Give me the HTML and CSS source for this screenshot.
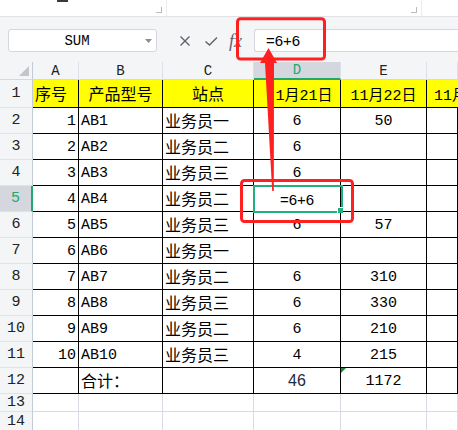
FILE: index.html
```html
<!DOCTYPE html>
<html lang="zh">
<head>
<meta charset="utf-8">
<title>Sheet</title>
<link rel="stylesheet" href="styles.css">
</head>
<body>
<div class="app">
  <div class="ribbon">
    <div class="grp g1"><span class="mark"></span><span class="tick"></span></div>
    <div class="grp g2"><span class="tick"></span></div>
    <div class="grp g3"></div>
  </div>
  <div class="fbar">
    <div class="namebox"><span class="nm">SUM</span><svg class="caret" width="7" height="4" viewBox="0 0 7 4"><path d="M0 0H7L3.5 4Z" fill="#8a8d93"/></svg></div>
    <div class="fbtns">
      <svg class="ico" width="16" height="16" viewBox="0 0 16 16"><path d="M3.5 3.5L12.5 12.5M12.5 3.5L3.5 12.5" stroke="#5f626a" stroke-width="1.4" fill="none"/></svg>
      <svg class="ico" width="16" height="16" viewBox="0 0 16 16"><path d="M2.5 8.5L6.5 12L14 4.5" stroke="#5f626a" stroke-width="1.4" fill="none"/></svg>
      <span class="fx">fx</span>
    </div>
    <div class="finput">=6+6</div>
  </div>
  <div class="sheet">
    <div class="corner"><span class="tri"></span></div>
    <div class="ch">A</div><div class="ch">B</div><div class="ch">C</div><div class="ch csel">D</div><div class="ch">E</div><div class="ch"></div>

    <div class="rh">1</div>
    <div class="c y"><span class="zh">序号</span></div>
    <div class="c y m"><span class="zh">产品型号</span></div>
    <div class="c y m"><span class="zh">站点</span></div>
    <div class="c y m dhead">1月21日</div>
    <div class="c y m">11月22日</div>
    <div class="c y fcol">11月</div>

    <div class="rh">2</div><div class="c r">1</div><div class="c">AB1</div><div class="c"><span class="zh">业务员一</span></div><div class="c m">6</div><div class="c m">50</div><div class="c"></div>
    <div class="rh">3</div><div class="c r">2</div><div class="c">AB2</div><div class="c"><span class="zh">业务员二</span></div><div class="c m">6</div><div class="c m"></div><div class="c"></div>
    <div class="rh">4</div><div class="c r">3</div><div class="c">AB3</div><div class="c"><span class="zh">业务员三</span></div><div class="c m">6</div><div class="c m"></div><div class="c"></div>
    <div class="rh rsel">5</div><div class="c r">4</div><div class="c">AB4</div><div class="c"><span class="zh">业务员二</span></div><div class="c m sans">=6+6</div><div class="c m"></div><div class="c"></div>
    <div class="rh">6</div><div class="c r">5</div><div class="c">AB5</div><div class="c"><span class="zh">业务员三</span></div><div class="c m">6</div><div class="c m">57</div><div class="c"></div>
    <div class="rh">7</div><div class="c r">6</div><div class="c">AB6</div><div class="c"><span class="zh">业务员一</span></div><div class="c m"></div><div class="c m"></div><div class="c"></div>
    <div class="rh">8</div><div class="c r">7</div><div class="c">AB7</div><div class="c"><span class="zh">业务员二</span></div><div class="c m">6</div><div class="c m">310</div><div class="c"></div>
    <div class="rh">9</div><div class="c r">8</div><div class="c">AB8</div><div class="c"><span class="zh">业务员三</span></div><div class="c m">6</div><div class="c m">330</div><div class="c"></div>
    <div class="rh">10</div><div class="c r">9</div><div class="c">AB9</div><div class="c"><span class="zh">业务员二</span></div><div class="c m">6</div><div class="c m">210</div><div class="c"></div>
    <div class="rh">11</div><div class="c r">10</div><div class="c">AB10</div><div class="c"><span class="zh">业务员三</span></div><div class="c m">4</div><div class="c m">215</div><div class="c"></div>
    <div class="rh">12</div><div class="c r"></div><div class="c"><span class="zh">合计：</span></div><div class="c"></div><div class="c m sans total">46</div><div class="c m flag">1172<span class="gtri"></span></div><div class="c"></div>

    <div class="rh">13</div><div class="e"></div><div class="e"></div><div class="e"></div><div class="e"></div><div class="e"></div><div class="e"></div>
    <div class="rh">14</div><div class="e"></div><div class="e"></div><div class="e"></div><div class="e"></div><div class="e"></div><div class="e"></div>

    <div class="active"><span class="handle"></span></div>
  </div>
  <svg class="annot" width="458" height="430" viewBox="0 0 458 430">
    <rect x="237.5" y="18.8" width="87" height="40.2" rx="3" fill="none" stroke="#ff2020" stroke-width="3"/>
    <rect x="241.5" y="180.5" width="111" height="41" rx="3" fill="none" stroke="#ff2020" stroke-width="3"/>
    <polygon points="268.5,48 277,63 274,63 273.8,191 272.2,191 265,63 260,63" fill="#ff2020"/>
  </svg>
</div>
</body>
</html>
```

FILE: styles.css
```css
body {
  margin: 0;
  background: #fff;
  font-family: "Liberation Mono", "Noto Sans CJK SC", monospace;
  color: #000;
}

.app {
  position: relative;
  width: 458px;
  height: 430px;
  overflow: hidden;
}

/* ribbon strip */
.ribbon {
  display: flex;
  height: 16px;
  background: #fff;
  border-bottom: 1px solid #e1e2e6;
}
.grp {
  display: flex;
  justify-content: flex-end;
  align-items: flex-end;
  box-sizing: border-box;
  padding: 0 4px 3px 0;
  border-right: 1px solid #ebecef;
}
.g1 {
  width: 167px;
  justify-content: space-between;
  padding-left: 57px;
}
.g2 { width: 255px; }
.g3 { flex: 1; border-right: none; }
.mark {
  align-self: flex-start;
  width: 11px;
  height: 2px;
  background: #3a3a3a;
}
.tick {
  width: 5px;
  height: 5px;
  border-right: 1px solid #b8bbc1;
  border-bottom: 1px solid #b8bbc1;
}

/* formula bar */
.fbar {
  display: flex;
  align-items: flex-start;
  height: 45px;
  box-sizing: border-box;
  padding: 12px 0 0 8px;
  background: #f4f5f7;
}
.namebox {
  width: 149px;
  height: 23px;
  box-sizing: border-box;
  border: 1px solid #d5d7dc;
  border-radius: 3px;
  background: #fff;
  display: flex;
  align-items: center;
}
.nm {
  flex: 1;
  text-align: center;
  font-size: 14px;
}
.caret { margin-right: 4px; }
.fbtns {
  display: flex;
  align-items: center;
  height: 23px;
  margin-left: 20px;
  gap: 10px;
}
.fx {
  font-family: "Liberation Serif", serif;
  font-style: italic;
  font-size: 18px;
  color: #5f626a;
  width: 17px;
  line-height: 20px;
}
.finput {
  flex: 1;
  margin-left: 8px;
  height: 23px;
  box-sizing: border-box;
  border: 1px solid #d5d7dc;
  border-right: none;
  border-radius: 3px 0 0 3px;
  background: #fff;
  padding-left: 11px;
  font-family: "Liberation Sans", sans-serif;
  font-size: 15px;
  line-height: 21px;
}

/* sheet grid */
.sheet {
  position: relative;
  display: grid;
  grid-template-columns: 33px 46px 84px 91px 87px 86px 1fr;
  grid-template-rows: 18px 28px repeat(11, 26px) 18px 20px;
  background: #fff;
}
.corner, .ch, .rh {
  background: #f4f5f7;
  box-sizing: border-box;
  display: flex;
  align-items: center;
  justify-content: center;
  font-size: 14px;
  color: #222;
}
.corner {
  border-right: 1px solid #c4cad8;
  border-bottom: 1px solid #d6d9df;
  justify-content: flex-end;
  align-items: flex-end;
  padding: 0 3px 3px 0;
}
.tri {
  width: 0;
  height: 0;
  border-left: 10px solid transparent;
  border-bottom: 10px solid #c3c5ca;
}
.ch {
  border-right: 1px solid #dcdfe5;
  border-bottom: 1px solid #d6d9df;
}
.csel {
  background: #d4d7de;
  color: #22a86f;
  border-bottom: 2px solid #22a86f;
}
.rh {
  border-right: 1px solid #c4cad8;
  border-bottom: 1px solid #e0e2e8;
  font-size: 15px;
}
.rsel {
  background: #d4d7de;
  color: #22a86f;
  border-right: 2px solid #22a86f;
}

.c {
  box-sizing: border-box;
  border-right: 1px solid #000;
  border-bottom: 1px solid #000;
  display: flex;
  align-items: center;
  padding: 1px 2px 0;
  white-space: nowrap;
  overflow: hidden;
  font-size: 15px;
}
.y { background: #ffff00; }
.r { justify-content: flex-end; }
.m { justify-content: center; }
.dhead { padding-left: 16px; }
.zh {
  font-size: 16px;
  font-family: "Noto Sans CJK SC", sans-serif;
  line-height: 20px;
  padding-bottom: 2px;
}
.fcol { padding-left: 7px; border-right: none; }
.sans {
  font-family: "Liberation Sans", sans-serif;
  font-size: 15px;
}
.total { font-size: 16px; color: #1e2a3c; }
.flag { position: relative; }
.gtri {
  position: absolute;
  left: 0;
  top: 0;
  width: 0;
  height: 0;
  border-top: 5px solid #1f8a35;
  border-right: 5px solid transparent;
}
.e {
  box-sizing: border-box;
  border-right: 1px solid #d8dbe3;
  border-bottom: 1px solid #d8dbe3;
}

.active {
  position: absolute;
  left: 253px;
  top: 123px;
  width: 90px;
  height: 28px;
  box-sizing: border-box;
  border: 2px solid #22b07a;
}
.handle {
  position: absolute;
  right: -2px;
  bottom: -2px;
  width: 5px;
  height: 5px;
  background: #22b07a;
  border-left: 1px solid #fff;
  border-top: 1px solid #fff;
}

.annot {
  position: absolute;
  left: 0;
  top: 0;
  pointer-events: none;
}
```
